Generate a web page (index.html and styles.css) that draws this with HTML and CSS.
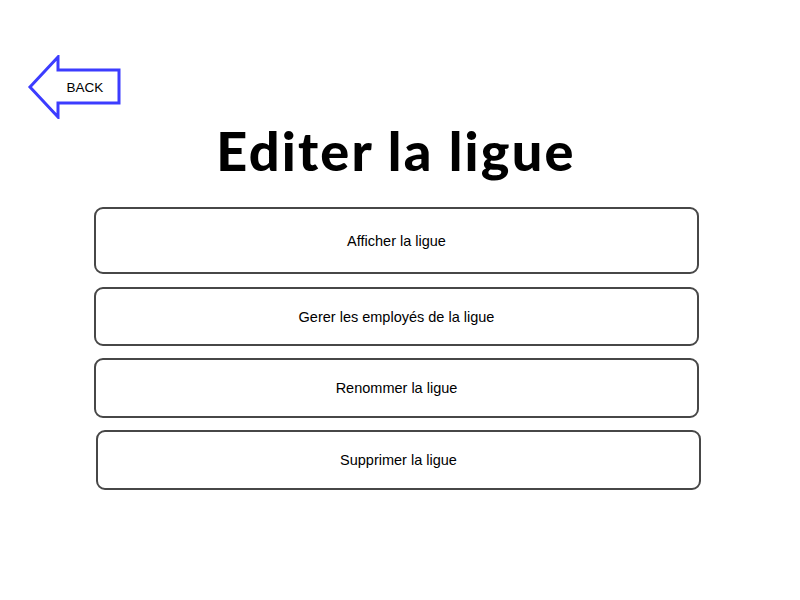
FILE: index.html
```html
<!DOCTYPE html>
<html lang="fr">
<head>
<meta charset="utf-8">
<title>Editer la ligue</title>
<link rel="stylesheet" href="styles.css">
</head>
<body>
<div class="page">
  <a class="back" href="#">
    <svg class="back-icon" width="95" height="64" viewBox="0 0 95 64">
      <polygon points="3,32 31,2 31,15 92,15 92,48 31,48 31,62" fill="#fff" stroke="#3c3cff" stroke-width="3" stroke-linejoin="miter"/>
      <text x="58" y="37" text-anchor="middle" class="back-text">BACK</text>
    </svg>
  </a>
  <h1 class="title">Editer la ligue</h1>
  <div class="menu">
    <button class="item item-1">Afficher la ligue</button>
    <button class="item item-2">Gerer les employés de la ligue</button>
    <button class="item item-3">Renommer la ligue</button>
    <button class="item item-4">Supprimer la ligue</button>
  </div>
</div>
</body>
</html>
```
FILE: styles.css
```css
html, body {
  margin: 0;
  padding: 0;
  background: #fff;
}
.page {
  width: 800px;
  height: 600px;
  padding-top: 55px;
  box-sizing: border-box;
  font-family: "Liberation Sans", Arial, sans-serif;
}
.back {
  display: block;
  width: 95px;
  height: 64px;
  margin-left: 27px;
  text-decoration: none;
}
.back-icon {
  display: block;
}
.back-text {
  font-family: "Liberation Sans", Arial, sans-serif;
  font-size: 13.5px;
  fill: #000;
}
.title {
  margin: 0;
  width: 792px;
  text-align: center;
  font-family: Lato, "Open Sans", sans-serif;
  font-weight: 900;
  font-size: 54px;
  line-height: 64px;
  letter-spacing: 2.2px;
  color: #000;
}
.menu {
  margin: 24px 0 0 94px;
  width: 605px;
  display: flex;
  flex-direction: column;
  gap: 12px;
}
.item {
  display: flex;
  align-items: center;
  justify-content: center;
  box-sizing: border-box;
  width: 605px;
  height: 60px;
  border: 2px solid #474747;
  border-radius: 9px;
  background: #fff;
  font-family: "Liberation Sans", Arial, sans-serif;
  font-size: 14.5px;
  color: #000;
  padding: 0;
}
.item-1 {
  height: 67px;
}
.item-2 {
  height: 59px;
  margin-top: 1px;
}
.item-4 {
  margin-left: 2px;
}
```
